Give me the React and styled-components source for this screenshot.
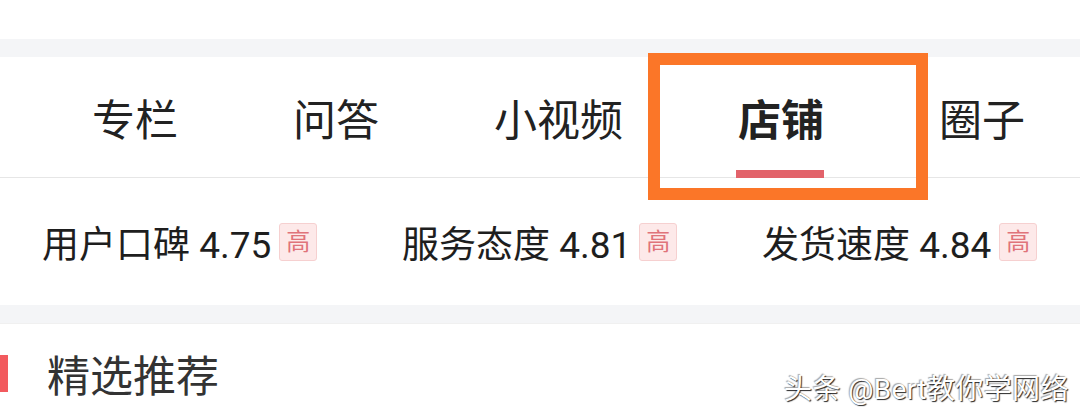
import React from "react";
import styled, { createGlobalStyle } from "styled-components";

const GlobalStyle = createGlobalStyle`
  html, body {
    margin: 0;
    padding: 0;
    background: #ffffff;
  }
  body {
    font-family: Roboto, "Noto Sans CJK SC", sans-serif;
    color: #222;
  }
`;

const tabs = ["专栏", "问答", "小视频", "店铺", "圈子"];
const scores = [
  { label: "用户口碑", value: "4.75" },
  { label: "服务态度", value: "4.81" },
  { label: "发货速度", value: "4.84" },
];

function App() {
  return (
    <Page>
      <GlobalStyle />
      <TopSpace />
      <Band />
      <TabBar>
        {tabs.map((t) => (
          <Tab key={t} active={t === "店铺"}>
            {t}
          </Tab>
        ))}
      </TabBar>
      <Scores>
        {scores.map((s) => (
          <Score key={s.label}>
            {s.label} {s.value}
            <Badge>高</Badge>
          </Score>
        ))}
      </Scores>
      <Band />
      <Section>
        <SectionTitle>精选推荐</SectionTitle>
      </Section>
      <Highlight />
      <Watermark>头条 @Bert教你学网络</Watermark>
    </Page>
  );
}

const Page = styled.div`
  position: relative;
  width: 1080px;
  height: 417px;
  overflow: hidden;
  background: #fff;
`;

const TopSpace = styled.div`
  height: 39px;
`;

const Band = styled.div`
  height: 18px;
  background: #f4f5f7;
`;

const TabBar = styled.div`
  display: flex;
  align-items: stretch;
  gap: 115px;
  height: 120px;
  padding-left: 92px;
  border-bottom: 1px solid #e6e6e6;
`;

const Tab = styled.div`
  position: relative;
  display: flex;
  align-items: center;
  font-size: 43px;
  font-weight: ${(p) => (p.active ? 700 : 400)};
  color: #222;
  white-space: nowrap;
  &::after {
    content: "";
    display: ${(p) => (p.active ? "block" : "none")};
    position: absolute;
    left: -2px;
    right: 0;
    bottom: -1px;
    height: 8px;
    background: #e2626a;
  }
`;

const Scores = styled.div`
  display: grid;
  grid-template-columns: repeat(3, 360px);
  height: 127px;
  align-items: center;
`;

const Score = styled.div`
  display: flex;
  align-items: center;
  padding-left: 42px;
  font-size: 37px;
  color: #1e1e1e;
  white-space: pre;
`;

const Badge = styled.span`
  display: inline-flex;
  align-items: center;
  justify-content: center;
  width: 38px;
  height: 38px;
  box-sizing: border-box;
  margin-left: 8px;
  border: 1px solid #f6d0d0;
  border-radius: 3px;
  background: #fde9e9;
  color: #e0737a;
  font-size: 24px;
  line-height: 1;
`;

const Section = styled.div`
  display: flex;
  align-items: center;
  height: 94px;
  padding-top: 5px;
  box-sizing: border-box;
  border-top: 1px solid #f0f0f0;
`;

const SectionTitle = styled.div`
  display: flex;
  align-items: center;
  font-size: 43px;
  color: #333;
  padding-left: 47px;
  position: relative;
  &::before {
    content: "";
    position: absolute;
    left: 0;
    top: 50%;
    margin-top: -18px;
    width: 8px;
    height: 37px;
    background: #f25a5e;
  }
`;

const Highlight = styled.div`
  position: absolute;
  left: 648px;
  top: 53px;
  width: 280px;
  height: 147px;
  box-sizing: border-box;
  border: 12px solid #fb7628;
`;

const Watermark = styled.div`
  position: absolute;
  left: 784px;
  top: 367px;
  font-size: 28px;
  letter-spacing: 0.4px;
  color: #fff;
  text-shadow: 1px 1px 1px rgba(0, 0, 0, 0.85), -1px -1px 1px rgba(0, 0, 0, 0.35);
  white-space: nowrap;
`;

export default App;
